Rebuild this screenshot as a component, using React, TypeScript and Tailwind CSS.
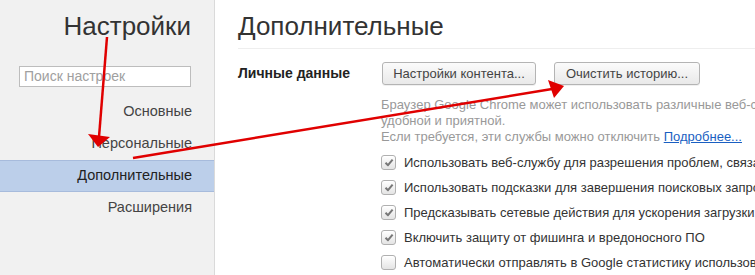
import React from "react";

const navItems = ["Основные", "Персональные", "Дополнительные", "Расширения"];

const checks = [
  { label: "Использовать веб-службу для разрешения проблем, связанных с навигацией", on: true },
  { label: "Использовать подсказки для завершения поисковых запросов и URL, вводимых в адресную строку", on: true },
  { label: "Предсказывать сетевые действия для ускорения загрузки страниц", on: true },
  { label: "Включить защиту от фишинга и вредоносного ПО", on: true },
  { label: "Автоматически отправлять в Google статистику использования и отчеты о сбоях", on: false },
];

function Checkbox({ on }: { on: boolean }) {
  return (
    <div className="w-[15px] h-[15px] shrink-0 rounded-[3px] border border-[#b0b0b0] bg-gradient-to-b from-[#ffffff] to-[#e4e4e4] flex items-center justify-center shadow-[inset_0_1px_0_#fff]">
      {on && (
        <svg width="10" height="9" viewBox="0 0 10 9">
          <path d="M1.5 4.8 L4 7.2 L8.6 1.6" fill="none" stroke="#777" strokeWidth="2" strokeLinejoin="round" />
        </svg>
      )}
    </div>
  );
}

function Button({ children, w }: { children: React.ReactNode; w: string }) {
  return (
    <div
      className={`${w} h-[23px] rounded-[3px] border border-[#b4b4b4] bg-gradient-to-b from-[#fbfbfb] to-[#e9e9e9] text-[13px] text-[#444] flex items-center justify-center shadow-[0_1px_0_rgba(0,0,0,0.06)]`}
    >
      {children}
    </div>
  );
}

export default function App() {
  return (
    <div className="relative w-[755px] h-[275px] overflow-hidden flex bg-white font-['Liberation_Sans',Arial,sans-serif] text-[#333]">
      {/* Sidebar */}
      <div className="w-[215px] shrink-0 bg-[#f1f1f1] border-r border-[#dadada] flex flex-col">
        <div className="pt-[11px] pr-[23px] text-right text-[26px] leading-[30px] text-[#333]">Настройки</div>
        <div className="mt-[25px] ml-[19px] w-[172px] h-[21px] border border-[#bdbdbd] bg-white flex items-center pl-[4px] text-[14px] text-[#a0a0a0]">
          Поиск настроек
        </div>
        <div className="mt-[9px] flex flex-col">
          {navItems.map((item) => {
            const sel = item === "Дополнительные";
            return (
              <div
                key={item}
                className={`h-[32px] flex items-center justify-end pr-[22px] text-[14.5px] ${
                  sel ? "bg-[#bccfea] border-y border-[#a7bbdc] text-[#222]" : "text-[#444]"
                }`}
              >
                {item}
              </div>
            );
          })}
        </div>
      </div>

      {/* Main */}
      <div className="flex-1 pl-[23px] flex flex-col min-w-0">
        <div className="pt-[11px] pb-[7px] text-[26px] leading-[30px] text-[#333] border-b border-[#eeeeee]">
          Дополнительные
        </div>

        <div className="mt-[13px] flex">
          <div className="w-[143px] shrink-0 h-[23px] flex items-center font-bold text-[14px] text-[#222]">Личные данные</div>
          <div className="flex flex-col min-w-0">
            <div className="flex gap-[18px] pl-[1px]">
              <Button w="w-[154px]">Настройки контента...</Button>
              <Button w="w-[146px]">Очистить историю...</Button>
            </div>

            <div className="mt-[12px] text-[13px] leading-[16px] text-[#999] whitespace-nowrap">
              <div>Браузер Google Chrome может использовать различные веб-службы, чтобы сделать работу в Интернете</div>
              <div>удобной и приятной.</div>
              <div>
                Если требуется, эти службы можно отключить{" "}
                <span className="text-[#1a5fc2] underline">Подробнее...</span>
              </div>
            </div>

            <div className="mt-[5px] flex flex-col">
              {checks.map((c) => (
                <div key={c.label} className="h-[25px] flex items-center gap-[8px] whitespace-nowrap text-[13px] text-[#333]">
                  <Checkbox on={c.on} />
                  <span>{c.label}</span>
                </div>
              ))}
            </div>
          </div>
        </div>
      </div>

      {/* Red annotation arrows */}
      <svg className="absolute inset-0 pointer-events-none" width="755" height="275" viewBox="0 0 755 275">
        <line x1="107" y1="37" x2="99" y2="137" stroke="#e00000" strokeWidth="2.5" />
        <polygon points="88,134 110,137 98,147" fill="#e00000" />
        <line x1="133" y1="158" x2="552" y2="89" stroke="#e00000" strokeWidth="2.5" />
        <polygon points="548,80 554,98 564,86" fill="#e00000" />
      </svg>
    </div>
  );
}
